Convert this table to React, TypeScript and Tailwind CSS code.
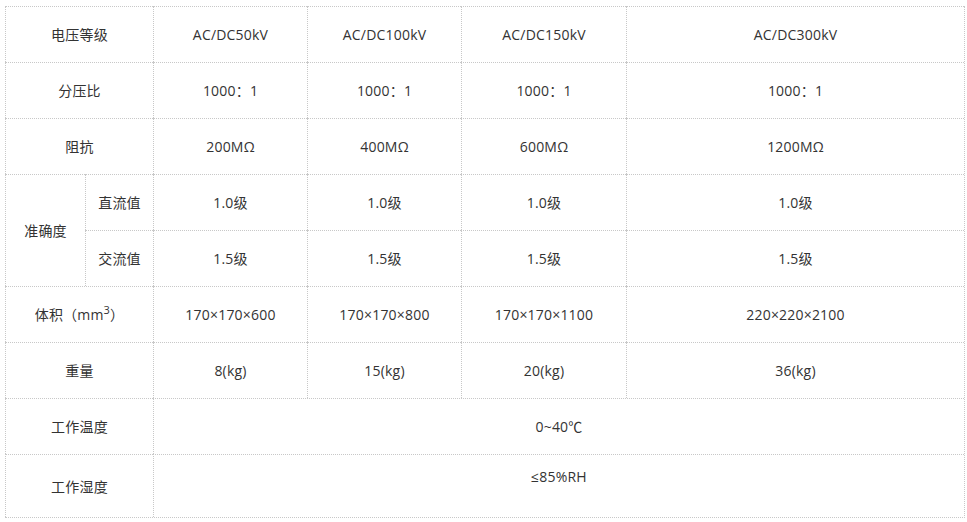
import React from "react";

const cell =
  "flex items-center justify-center border-l border-t border-dotted border-[#c8c8c8] text-center";

const values: { label: string; vals: string[] }[] = [
  { label: "电压等级", vals: ["AC/DC50kV", "AC/DC100kV", "AC/DC150kV", "AC/DC300kV"] },
  { label: "分压比", vals: ["1000：1", "1000：1", "1000：1", "1000：1"] },
  { label: "阻抗", vals: ["200MΩ", "400MΩ", "600MΩ", "1200MΩ"] },
];

export default function App() {
  return (
    <div
      className="w-[967px] h-[522px] bg-white pt-[6px] pl-[5px] text-[14px] text-[#333] tracking-[0.2px]"
      style={{ fontFamily: '"Open Sans", "Noto Sans CJK SC", sans-serif' }}
    >
      <div className="grid w-[960px] grid-cols-[80px_68px_154px_154px_165px_338px] grid-rows-[56px_56px_56px_56px_56px_56px_56px_56px_63px] border-r border-b border-dotted border-[#c8c8c8]">
        {values.map((r) => (
          <React.Fragment key={r.label}>
            <div className={`${cell} col-span-2`}>{r.label}</div>
            {r.vals.map((v, i) => (
              <div key={i} className={cell}>{v}</div>
            ))}
          </React.Fragment>
        ))}
        <div className={`${cell} row-span-2`}>准确度</div>
        <div className={cell}>直流值</div>
        {["1.0级", "1.0级", "1.0级", "1.0级"].map((v, i) => (
          <div key={"a" + i} className={cell}>{v}</div>
        ))}
        <div className={cell}>交流值</div>
        {["1.5级", "1.5级", "1.5级", "1.5级"].map((v, i) => (
          <div key={"b" + i} className={cell}>{v}</div>
        ))}
        <div className={`${cell} col-span-2`}>
          <span>
            体积（mm<sup className="text-[11px] relative -top-[6px]">3</sup>）
          </span>
        </div>
        {["170×170×600", "170×170×800", "170×170×1100", "220×220×2100"].map((v, i) => (
          <div key={"c" + i} className={cell}>{v}</div>
        ))}
        <div className={`${cell} col-span-2`}>重量</div>
        {["8(kg)", "15(kg)", "20(kg)", "36(kg)"].map((v, i) => (
          <div key={"d" + i} className={cell}>{v}</div>
        ))}
        <div className={`${cell} col-span-2`}>工作温度</div>
        <div className={`${cell} col-span-4`}>0~40℃</div>
        <div className={`${cell} col-span-2`}>工作湿度</div>
        <div className="col-span-4 flex items-start justify-center border-l border-t border-dotted border-[#c8c8c8] pt-[11px]">
          ≤85%RH
        </div>
      </div>
    </div>
  );
}
